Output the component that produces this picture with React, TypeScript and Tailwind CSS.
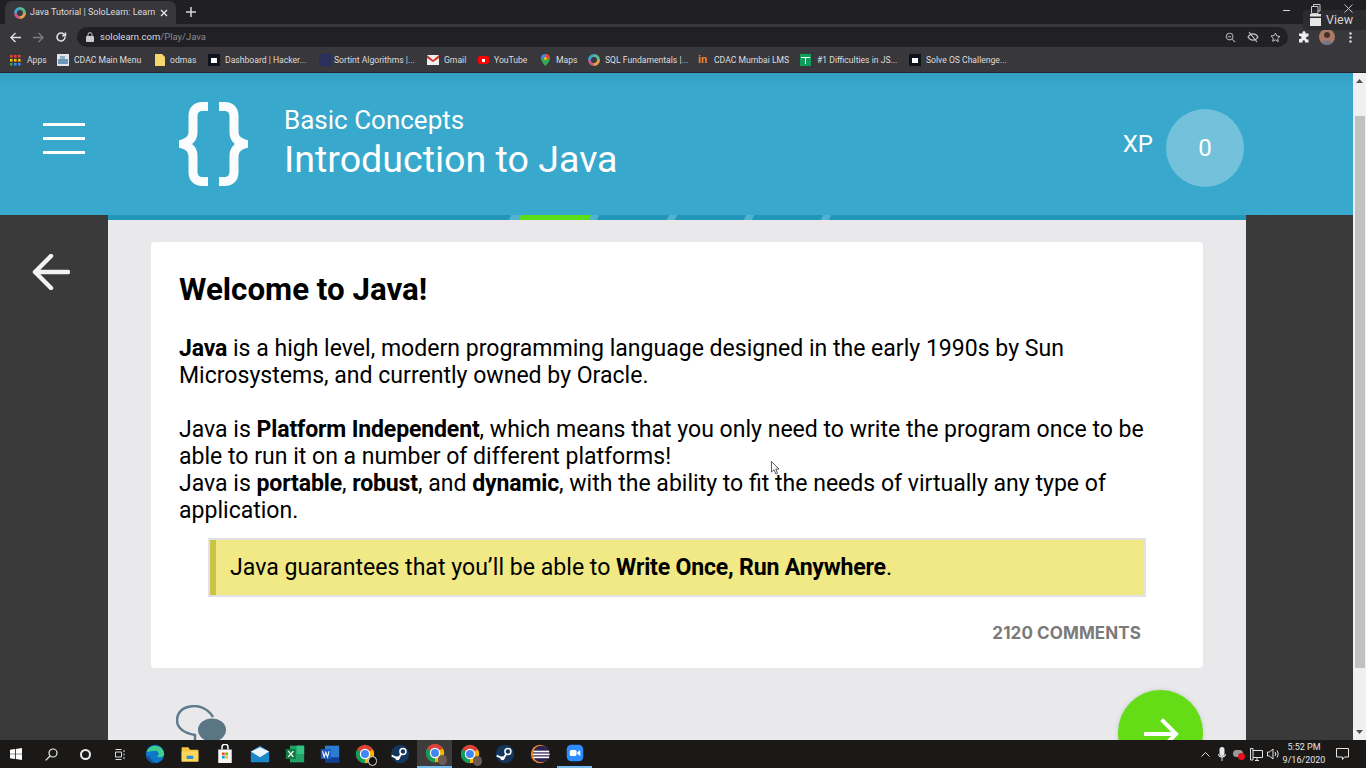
import React from "react";

const Chrome = ({ s = 14 }: { s?: number }) => (
  <svg width={s} height={s} viewBox="0 0 24 24">
    <circle cx="12" cy="12" r="11" fill="#db4437" />
    <path d="M12 12 L2.5 6.5 A11 11 0 0 0 12 23 Z" fill="#0f9d58" />
    <path d="M12 12 L21.5 6.5 A11 11 0 0 1 12 23 Z" fill="#f4b400" />
    <circle cx="12" cy="12" r="5.5" fill="#4285f4" stroke="#fff" strokeWidth="1.5" />
  </svg>
);

const ChromeBadge = ({ dark }: { dark?: boolean }) => (
  <span className="relative flex h-[20px] w-[20px]">
    <Chrome s={20} />
    <span className={`absolute right-[-2px] bottom-[-2px] h-[10px] w-[9px] rounded-full ${dark ? "bg-[#111111] border border-[#dddddd]" : "bg-[#6b5a56]"}`} />
  </span>
);

const SoloLearn = ({ s = 12 }: { s?: number }) => (
  <svg width={s} height={s} viewBox="0 0 24 24" fill="none" strokeWidth="6">
    <path d="M12 3 A9 9 0 0 1 21 12" stroke="#5bb98c" />
    <path d="M21 12 A9 9 0 0 1 12 21" stroke="#e8a04c" />
    <path d="M12 21 A9 9 0 0 1 3 12" stroke="#c45a8a" />
    <path d="M3 12 A9 9 0 0 1 12 3" stroke="#3ea6d0" />
  </svg>
);

const Steam = () => (
  <svg width="20" height="20" viewBox="0 0 24 24">
    <circle cx="12" cy="12" r="11" fill="#14365c" />
    <circle cx="15.5" cy="9" r="3.6" fill="none" stroke="#fff" strokeWidth="1.8" />
    <path d="M2 14 L10 17.5 L14 11" fill="none" stroke="#fff" strokeWidth="2.2" />
    <circle cx="9" cy="17" r="2.4" fill="#fff" />
  </svg>
);

const HackerRank = () => (
  <span className="flex h-[12px] w-[12px] items-center justify-center bg-[#0e141e]">
    <span className="h-[5px] w-[6px] bg-white" />
  </span>
);

const B = ({ children }: { children: React.ReactNode }) => <b className="font-bold tracking-[-0.15px]">{children}</b>;

const bookmarks: { label: string; cls: string; icon: React.ReactNode }[] = [
  {
    label: "Apps",
    cls: "w-[47px] gap-[6px]",
    icon: (
      <svg width="11" height="11" viewBox="0 0 11 11">
        {[0, 4, 8].map((x) =>
          [0, 4, 8].map((y) => (
            <rect key={`${x}-${y}`} x={x} y={y} width="2.6" height="2.6" fill={y === 0 ? "#ea4335" : y === 4 ? "#fbbc05" : x === 0 ? "#34a853" : "#4285f4"} />
          ))
        )}
      </svg>
    ),
  },
  {
    label: "CDAC Main Menu",
    cls: "w-[98px] gap-[5px]",
    icon: (
      <svg width="12" height="12" viewBox="0 0 12 12">
        <rect width="12" height="12" fill="#dfe7ee" />
        <rect x="1" y="5" width="10" height="5" fill="#6d97b8" />
        <rect x="3" y="2" width="5" height="3" fill="#94aec4" />
      </svg>
    ),
  },
  {
    label: "odmas",
    cls: "w-[53px] gap-[5px]",
    icon: (
      <svg width="10" height="12" viewBox="0 0 10 12">
        <path d="M0 0H7L10 3V12H0Z" fill="#f5d76e" />
      </svg>
    ),
  },
  { label: "Dashboard | Hacker...", cls: "w-[111px] gap-[5px]", icon: <HackerRank /> },
  { label: "Sortint Algorithms |...", cls: "w-[108px] gap-[3px]", icon: <span className="h-[12px] w-[12px] bg-[#29305c]" /> },
  {
    label: "Gmail",
    cls: "w-[51px] gap-[5px]",
    icon: (
      <svg width="12" height="10" viewBox="0 0 12 10">
        <rect width="12" height="10" fill="#eee" />
        <path d="M0 0 L6 5 L12 0 V3 L6 7 L0 3Z" fill="#d93025" />
      </svg>
    ),
  },
  {
    label: "YouTube",
    cls: "w-[63px] gap-[5px]",
    icon: (
      <span className="flex h-[8px] w-[11px] items-center justify-center rounded-[2px] bg-[#ff0000]">
        <span className="h-[3px] w-[3px] bg-white" />
      </span>
    ),
  },
  {
    label: "Maps",
    cls: "w-[47px] gap-[6px]",
    icon: (
      <svg width="9" height="12" viewBox="0 0 9 12">
        <path d="M4.5 0A4.5 4.5 0 0 0 0 4.5C0 7.5 4.5 12 4.5 12S9 7.5 9 4.5A4.5 4.5 0 0 0 4.5 0Z" fill="#34a853" />
        <path d="M4.5 0A4.5 4.5 0 0 0 0 4.5L4.5 5Z" fill="#4285f4" />
        <path d="M4.5 0A4.5 4.5 0 0 1 9 4.5L4.5 5Z" fill="#ea4335" />
        <circle cx="4.5" cy="4.5" r="1.5" fill="#fbbc05" />
      </svg>
    ),
  },
  { label: "SQL Fundamentals |...", cls: "w-[110px] gap-[5px]", icon: <SoloLearn /> },
  {
    label: "CDAC Mumbai LMS",
    cls: "w-[102px] gap-[4px]",
    icon: <span className="w-[12px] text-[11px] leading-[12px] font-bold text-[#e8862e]">in</span>,
  },
  {
    label: "#1 Difficulties in JS...",
    cls: "w-[109px] gap-[6px]",
    icon: (
      <span className="relative h-[12px] w-[11px] bg-[#0f9d58]">
        <span className="absolute top-[3px] left-[1px] h-[1px] w-[9px] bg-white" />
        <span className="absolute top-[3px] left-[5px] h-[7px] w-[1px] bg-white" />
      </span>
    ),
  },
  { label: "Solve OS Challenge...", cls: "w-[110px] gap-[5px]", icon: <HackerRank /> },
];

const taskIcons: { key: string; active?: boolean; open?: boolean; node: React.ReactNode }[] = [
  {
    key: "edge",
    node: (
      <svg width="20" height="20" viewBox="0 0 24 24">
        <circle cx="12" cy="12" r="11" fill="#0c78c7" />
        <path d="M2 9 A11 11 0 0 1 23 12 C23 16 17 17 14 15 C18 14 17 8 12 8 C7 8 3 10 2 9Z" fill="#3ecf8e" />
        <path d="M6 15 C6 19 11 22 15 22 C9 24 3 20 2 14 Z" fill="#1b4f9c" />
      </svg>
    ),
  },
  {
    key: "files",
    node: (
      <svg width="20" height="20" viewBox="0 0 24 24">
        <path d="M2 4H10L12 7H22V21H2Z" fill="#f6c544" />
        <rect x="2" y="9" width="20" height="12" fill="#fbd75b" />
        <rect x="8" y="14" width="8" height="4" fill="#2f8fd6" />
      </svg>
    ),
  },
  {
    key: "store",
    node: (
      <svg width="18" height="20" viewBox="0 0 24 26">
        <path d="M8 7V4a4 4 0 0 1 8 0V7" fill="none" stroke="#fff" strokeWidth="2" />
        <rect x="3" y="7" width="18" height="18" fill="#f4f4f4" />
        <rect x="8" y="11" width="3.6" height="3.6" fill="#f25022" />
        <rect x="12.4" y="11" width="3.6" height="3.6" fill="#7fba00" />
        <rect x="8" y="15.4" width="3.6" height="3.6" fill="#00a4ef" />
        <rect x="12.4" y="15.4" width="3.6" height="3.6" fill="#ffb900" />
      </svg>
    ),
  },
  {
    key: "mail",
    node: (
      <svg width="20" height="20" viewBox="0 0 24 24">
        <path d="M1 9 L12 2 L23 9 V22 H1Z" fill="#1b87c9" />
        <path d="M1 9 L12 16 L23 9 L12 4Z" fill="#e9f4fb" />
      </svg>
    ),
  },
  {
    key: "excel",
    node: (
      <svg width="20" height="20" viewBox="0 0 24 24">
        <rect x="6" y="2" width="17" height="20" fill="#21a366" />
        <rect x="14" y="2" width="9" height="10" fill="#33c481" />
        <rect x="1" y="6" width="12" height="12" fill="#107c41" />
        <path d="M4 8.5 L10 15.5 M10 8.5 L4 15.5" stroke="#fff" strokeWidth="1.6" />
      </svg>
    ),
  },
  {
    key: "word",
    node: (
      <svg width="20" height="20" viewBox="0 0 24 24">
        <rect x="6" y="2" width="17" height="20" fill="#2b7cd3" />
        <rect x="6" y="16" width="17" height="6" fill="#103f91" />
        <rect x="1" y="6" width="12" height="12" fill="#185abd" />
        <path d="M3 8.5 L5 15.5 L7 10 L9 15.5 L11 8.5" fill="none" stroke="#fff" strokeWidth="1.3" />
      </svg>
    ),
  },
  { key: "chrome1", node: <ChromeBadge dark /> },
  { key: "steam1", node: <Steam /> },
  { key: "chrome2", active: true, node: <ChromeBadge /> },
  { key: "chrome3", node: <ChromeBadge /> },
  { key: "steam2", node: <Steam /> },
  {
    key: "eclipse",
    node: (
      <svg width="20" height="20" viewBox="0 0 24 24">
        <circle cx="12" cy="12" r="11" fill="#e8862e" />
        <circle cx="13.5" cy="12" r="10" fill="#2c2255" />
        <rect x="4" y="8" width="19" height="2" fill="#fff" />
        <rect x="3.5" y="11.5" width="20" height="2" fill="#fff" />
        <rect x="4" y="15" width="19" height="2" fill="#fff" />
      </svg>
    ),
  },
  {
    key: "zoom",
    open: true,
    node: (
      <svg width="18" height="18" viewBox="0 0 24 24">
        <rect x="1" y="1" width="22" height="22" rx="6" fill="#2d8cff" />
        <rect x="5" y="8" width="9" height="8" rx="2" fill="#fff" />
        <path d="M15 11 L19 8 V16 L15 13Z" fill="#fff" />
      </svg>
    ),
  },
];

export default function App() {
  return (
    <div className="flex h-[768px] w-[1366px] flex-col overflow-hidden bg-[#3a3a3a] font-['Roboto',sans-serif] text-black">
      {/* Tab strip */}
      <div className="relative flex h-[24px] shrink-0 items-end bg-[#201f23] pl-[5px]">
        <div className="flex h-[23px] w-[171px] items-center rounded-t-[7px] bg-[#38373c] pl-[9px] text-[#dcdcdc]">
          <SoloLearn s={12} />
          <span className="ml-[4px] w-[126px] overflow-hidden text-[9px] whitespace-nowrap">Java Tutorial | SoloLearn: Learn to</span>
          <svg className="ml-[4px]" width="8" height="8" viewBox="0 0 8 8" stroke="#e8e8e8" strokeWidth="1.3">
            <path d="M1 1L7 7M7 1L1 7" />
          </svg>
        </div>
        <svg className="mb-[7px] ml-[10px]" width="10" height="10" viewBox="0 0 10 10" stroke="#d8d8d8" strokeWidth="1.5">
          <path d="M5 0V10M0 5H10" />
        </svg>
        <div className="absolute top-0 right-0 h-[30px] w-[90px] text-[#e0e0e0]">
          <div className="absolute top-[10px] left-[27px] flex h-[20px] w-[63px] items-center gap-[5px] rounded-l-[4px] bg-[#2c2b2f] pl-[7px]">
            <svg width="11" height="12" viewBox="0 0 11 12">
              <rect y="4" width="11" height="8" fill="#e6e6e6" />
              <path d="M0 0H11V2.500H0Z" fill="#e6e6e6" />
            </svg>
            <span className="text-[12.500px] leading-[14px] text-[#d4d4d4]">View</span>
          </div>
          <span className="absolute top-[10px] left-[7px] h-[1px] w-[7px] bg-[#d8d8d8]" />
          <svg className="absolute top-[4px] left-[35px]" width="10" height="10" viewBox="0 0 10 10" fill="none" stroke="#c8c8c8">
            <path d="M2.500 2.500V.5H9V7H7M.5 2.500H7V9.500H.5Z" />
          </svg>
          <svg className="absolute top-[4px] left-[68px]" width="9" height="9" viewBox="0 0 9 9" stroke="#c8c8c8">
            <path d="M.5 .5L8.500 8.500M8.500 .5L.5 8.500" />
          </svg>
        </div>
      </div>

      {/* Toolbar */}
      <div className="flex h-[25px] shrink-0 items-center bg-[#38373c] pt-[1px] pl-[10px]">
        <svg width="11" height="11" viewBox="0 0 12 12" fill="none" stroke="#e0e0e0" strokeWidth="1.5">
          <path d="M12 6H1.500M6 1L1 6L6 11" />
        </svg>
        <svg className="ml-[12px]" width="11" height="11" viewBox="0 0 12 12" fill="none" stroke="#7c7c80" strokeWidth="1.5">
          <path d="M0 6H10.500M6 1L11 6L6 11" />
        </svg>
        <svg className="ml-[11px]" width="12" height="12" viewBox="0 0 24 24" fill="none" stroke="#e0e0e0" strokeWidth="3">
          <path d="M20 12a8 8 0 1 1-2.500-5.800L21 9.500M21 3v6.500h-6.500" />
        </svg>
        <div className="ml-[10px] flex h-[20px] w-[1211px] shrink-0 items-center rounded-[10px] bg-[#212024] pl-[9px]">
          <svg width="8" height="10" viewBox="0 0 8 10">
            <path d="M2 4V2.600a2 2 0 0 1 4 0V4" fill="none" stroke="#ccc" />
            <rect y="4" width="8" height="6" rx="1" fill="#ccc" />
          </svg>
          <span className="ml-[6px] text-[9.500px] text-[#d8d8d8]">sololearn.com</span>
          <span className="text-[9.500px] text-[#8a8a8e]">/Play/Java</span>
          <div className="ml-auto flex items-center gap-[11px] pr-[7px]">
            <svg width="11" height="11" viewBox="0 0 12 12" fill="none" stroke="#a8a8a8" strokeWidth="1.2">
              <circle cx="5" cy="5" r="3.600" />
              <path d="M8 8L11 11M3.500 5H6.500" />
            </svg>
            <svg width="12" height="12" viewBox="0 0 12 12" fill="none" stroke="#c4c4c4" strokeWidth="1.2">
              <path d="M1 6C2.500 3.500 4 2.800 6 2.800S9.500 3.500 11 6C9.500 8.500 8 9.200 6 9.200S2.500 8.500 1 6Z" />
              <path d="M2 1L10 11" />
            </svg>
            <svg width="11" height="11" viewBox="0 0 24 24" fill="none" stroke="#d0d0d0" strokeWidth="2">
              <path d="M12 2.500l3 6.300 6.800.9-5 4.700 1.300 6.800L12 17l-6.100 3.200 1.300-6.800-5-4.700 6.800-.9z" />
            </svg>
          </div>
        </div>
        <svg className="ml-[10px]" width="12" height="12" viewBox="0 0 24 24" fill="#eee">
          <path d="M9 3a3 3 0 0 1 6 0v2h6v6h-2a3 3 0 0 0 0 6h2v6h-7v-2a2.500 2.500 0 0 0-5 0v2H2v-7h2a3 3 0 0 0 0-6H2V5h7z" />
        </svg>
        <svg className="ml-[9px]" width="16" height="16" viewBox="0 0 16 16">
          <circle cx="8" cy="8" r="8" fill="#a97a68" />
          <circle cx="8" cy="6" r="3" fill="#4a3029" />
          <path d="M3 14C4 10.500 12 10.500 13 14L8 16Z" fill="#6c7a8c" />
        </svg>
        <svg className="ml-[14px]" width="3" height="11" viewBox="0 0 3 11" fill="#ddd">
          <circle cx="1.500" cy="1.500" r="1.200" />
          <circle cx="1.500" cy="5.500" r="1.200" />
          <circle cx="1.500" cy="9.500" r="1.200" />
        </svg>
      </div>

      {/* Bookmarks */}
      <div className="flex h-[23px] shrink-0 items-center bg-[#38373c] pl-[10px] text-[8.600px] text-[#dedede]">
        {bookmarks.map((b) => (
          <div key={b.label} className={`flex shrink-0 items-center whitespace-nowrap ${b.cls}`}>
            {b.icon}
            <span>{b.label}</span>
          </div>
        ))}
      </div>
      <div className="h-px shrink-0 bg-[#26252a]" />

      {/* Page + scrollbar */}
      <div className="flex min-h-0 flex-1">
        <div className="flex min-w-0 flex-1 flex-col">
          {/* Header */}
          <header className="flex h-[142px] shrink-0 items-center bg-[#38a9cd] bg-gradient-to-b from-[#339fc2] to-[#38a9cd] to-[10%] text-white">
            <div className="mt-[-11px] ml-[43px] flex w-[42px] flex-col gap-[11px]">
              <span className="h-[3px] bg-white" />
              <span className="h-[3px] bg-white" />
              <span className="h-[3px] bg-white" />
            </div>
            <svg className="ml-[94px]" width="69" height="84" viewBox="0 0 69 84" fill="none" stroke="#fbfcfd" strokeWidth="9">
              <path d="M29 4.500H23.500C17 4.500 14 8 14 14V30C14 36 10 40 3.500 42C10 44 14 48 14 54V70C14 76 17 79.500 23.500 79.500H29" />
              <path d="M40 4.500H45.500C52 4.500 55 8 55 14V30C55 36 59 40 65.500 42C59 44 55 48 55 54V70C55 76 52 79.500 45.500 79.500H40" />
            </svg>
            <div className="mt-[-4px] ml-[36px] flex flex-col">
              <span className="text-[26px] leading-[30px]">Basic Concepts</span>
              <span className="mt-[3px] text-[37.600px] leading-[42px]">Introduction to Java</span>
            </div>
            <div className="mr-[109px] ml-auto flex items-center gap-[13px]">
              <span className="text-[24px]">XP</span>
              <span className="mt-[8px] flex h-[78px] w-[78px] items-center justify-center rounded-full bg-[#73c1da] text-[24px]">0</span>
            </div>
          </header>

          {/* Body */}
          <div className="flex min-h-0 flex-1">
            <div className="flex w-[108px] shrink-0 justify-center pt-[39px] pr-[6px]">
              <svg width="38" height="36" viewBox="0 0 38 36" fill="none" stroke="#f2f2f2" strokeWidth="4.500" strokeLinecap="round" strokeLinejoin="round">
                <path d="M36 18H3M19 2L3 18L19 34" />
              </svg>
            </div>

            <div className="flex w-[1138px] shrink-0 flex-col overflow-hidden bg-[#e9e8eb]">
              <div className="flex h-[5px] shrink-0 gap-[8px] overflow-hidden bg-[#52b3d1]">
                <span className="mr-[2px] ml-[-4px] w-[406px] shrink-0 -skew-x-[25deg] bg-[#2397b9]" />
                <span className="w-[70px] shrink-0 -skew-x-[25deg] bg-[#5bdd17]" />
                <span className="w-[70px] shrink-0 -skew-x-[25deg] bg-[#2397b9]" />
                <span className="w-[69px] shrink-0 -skew-x-[25deg] bg-[#2397b9]" />
                <span className="w-[69px] shrink-0 -skew-x-[25deg] bg-[#2397b9]" />
                <span className="mr-[-6px] flex-1 -skew-x-[25deg] bg-[#2397b9]" />
              </div>

              <main className="mx-[43px] mt-[22px] h-[426px] shrink-0 rounded-[4px] bg-white px-[28px] pt-[29px]">
                <h1 className="text-[31.300px] leading-[38px] font-bold">Welcome to Java!</h1>
                <div className="mt-[26px] w-[990px] text-[23.050px] leading-[27px]">
                  <p>
                    <B>Java</B> is a high level, modern programming language designed in the early 1990s by Sun Microsystems, and currently owned by Oracle.
                  </p>
                  <p className="mt-[27px]">
                    Java is <B>Platform Independent</B>, which means that you only need to write the program once to be able to run it on a number of different platforms!
                  </p>
                  <p>
                    Java is <B>portable</B>, <B>robust</B>, and <B>dynamic</B>, with the ability to fit the needs of virtually any type of application.
                  </p>
                </div>
                <div className="mt-[14px] ml-[29px] flex h-[59px] w-[938px] items-center border-2 border-[#e2e2e2] bg-[#f0e985]">
                  <span className="h-full w-[6px] shrink-0 bg-[#c9c445]" />
                  <p className="pt-[2px] pl-[14px] text-[23.100px]">
                    Java guarantees that you’ll be able to <b className="font-bold tracking-[-0.2px]">Write Once, Run Anywhere</b>.
                  </p>
                </div>
                <div className="mt-[26px] pr-[34px] text-right font-['Inter',sans-serif] text-[17px] leading-[20px] font-bold tracking-[0.1px] text-[#7a7a7a]">2120 COMMENTS</div>
              </main>

              <div className="flex min-h-0 flex-1 items-start justify-between overflow-hidden pr-[43px] pl-[68px]">
                <div className="mt-[37px] h-[50px] w-[50px] shrink-0">
                  <svg width="50" height="50" viewBox="0 0 50 50" fill="none">
                    <path d="M37 12C31 2 20 0 14 1.500C4 3 1 10 1 15C1 23 8 28 19 30L19 36" stroke="#5f7c8c" strokeWidth="2.500" />
                    <ellipse cx="36" cy="25" rx="14" ry="11.500" fill="#5a7584" />
                  </svg>
                </div>
                <div className="mt-[22px] flex h-[85px] w-[85px] shrink-0 items-center justify-center rounded-full bg-[#64dd17] shadow-[0_0_4px_rgba(0,0,0,0.15)]">
                  <svg className="mt-[2px]" width="36" height="32" viewBox="0 0 36 32" fill="none" stroke="#fff" strokeWidth="4" strokeLinecap="square" strokeLinejoin="miter">
                    <path d="M3 16H32M20 3L33 16L20 29" />
                  </svg>
                </div>
              </div>
            </div>
            <div className="flex-1" />
          </div>
        </div>

        {/* Scrollbar */}
        <div className="flex w-[13px] shrink-0 flex-col items-center bg-[#f1eff3]">
          <svg className="mt-[6px]" width="7" height="4" viewBox="0 0 7 4" fill="#505050">
            <path d="M3.500 0L7 4H0Z" />
          </svg>
          <span className="mt-[33px] h-[552px] w-[10px] bg-[#c1c1c1]" />
          <svg className="mt-auto mb-[6px]" width="7" height="4" viewBox="0 0 7 4" fill="#505050">
            <path d="M0 0H7L3.500 4Z" />
          </svg>
        </div>
      </div>

      {/* Taskbar */}
      <div className="flex h-[28px] shrink-0 items-center bg-[#1a1918] text-[#e4e4e4]">
        <span className="ml-[10px] flex w-[12px]">
          <svg width="12" height="12" viewBox="0 0 12 12" fill="#fff">
            <path d="M0 1.700L5 1V5.700H0ZM5.800 .9L12 0V5.700H5.800ZM0 6.300H5V11L0 10.300ZM5.800 6.300H12V12L5.800 11.100Z" />
          </svg>
        </span>
        <svg className="ml-[23px]" width="13" height="13" viewBox="0 0 13 13" fill="none" stroke="#eee" strokeWidth="1.200">
          <circle cx="8" cy="5" r="4" />
          <path d="M5 8L.7 12.300" />
        </svg>
        <span className="ml-[22px] h-[11px] w-[11px] rounded-full border-2 border-[#eee]" />
        <svg className="ml-[23px]" width="11" height="11" viewBox="0 0 11 11" fill="none" stroke="#ddd">
          <path d="M1.500 .5H7.500M1.500 10.500H7.500M1.500 3H7.500V8H1.500ZM10 1V3M10 4.500V6.500M10 8V10" />
        </svg>
        <div className="ml-[12px] flex h-full items-center">
          {taskIcons.map((t) => (
            <div key={t.key} className={`flex h-full w-[35px] shrink-0 items-center justify-center ${t.active ? "border-b-2 border-[#76b9ed] bg-[#3d3c3b]" : t.open ? "border-b-2 border-[#76b9ed]" : ""}`}>
              {t.node}
            </div>
          ))}
        </div>
        <div className="ml-auto flex items-center">
          <svg width="9" height="6" viewBox="0 0 9 6" fill="none" stroke="#ddd">
            <path d="M.5 5.500L4.500 1.500L8.500 5.500" />
          </svg>
          <svg className="ml-[8px]" width="8" height="14" viewBox="0 0 8 14" fill="#e8e8e8">
            <rect x="1.500" width="5" height="9" rx="2.500" />
            <path d="M0 7H1C1 10 7 10 7 7H8C8 9.500 6 10.500 4.500 10.500V14H3.500V10.500C2 10.500 0 9.500 0 7Z" />
          </svg>
          <span className="relative ml-[7px] h-[12px] w-[12px]">
            <span className="absolute top-[2px] left-0 h-[7px] w-[10px] rounded-full bg-[#9a9a9a]" />
            <span className="absolute top-[5px] left-[5px] h-[7px] w-[7px] rounded-full bg-[#e81123]" />
          </span>
          <svg className="ml-[5px]" width="13" height="13" viewBox="0 0 13 13" fill="none" stroke="#e4e4e4">
            <path d="M3 2.500H12.500V9.500H3M.5 .5H3V12H.5ZM7 9.500V12M5 12.500H9" />
          </svg>
          <svg className="ml-[4px]" width="13" height="12" viewBox="0 0 13 12" fill="none" stroke="#e4e4e4">
            <path d="M.5 4H2.500L6 1V11L2.500 8H.5ZM8 4C9 5 9 7 8 8M10 2.500C11.500 4.500 11.500 7.500 10 9.500" />
          </svg>
          <div className="ml-[4px] flex w-[40px] flex-col items-center text-[9px] leading-[13px] whitespace-nowrap">
            <span>5:52 PM</span>
            <span>9/16/2020</span>
          </div>
          <svg className="mr-[17px] ml-[12px]" width="13" height="12" viewBox="0 0 13 12" fill="none" stroke="#e4e4e4">
            <path d="M.5 .5H12.500V9H8.500L6.500 11.500V9H.5Z" />
          </svg>
        </div>
      </div>

      {/* Mouse cursor */}
      <svg className="absolute top-[461px] left-[771px]" width="9" height="14" viewBox="0 0 9 14" fill="#fff" stroke="#333" strokeWidth="0.8">
        <path d="M.5 .5V11L3 8.700L4.800 13L6.500 12.300L4.800 8H8Z" />
      </svg>
    </div>
  );
}
